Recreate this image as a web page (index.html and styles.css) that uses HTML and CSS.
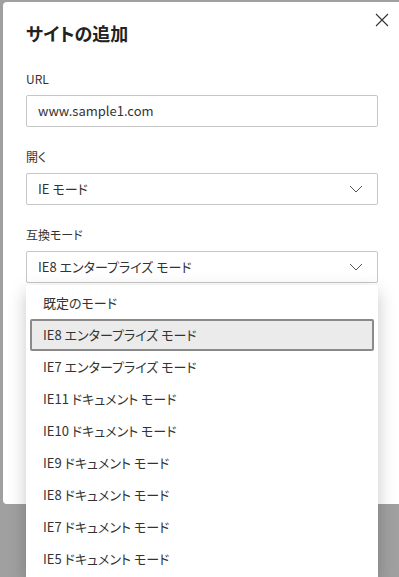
FILE: index.html
```html
<html>
    <head>
        <title>サイトの追加</title>
        <link rel="stylesheet" href="styles.css">
    </head>

    <body>
        <!-- Dialog -->
        <div class="dialog">
            <button class="close" aria-label="閉じる">
                <svg width="14" height="14" viewBox="0 0 14 14">
                    <path d="M1 1 L13 13 M13 1 L1 13" stroke="#333" stroke-width="1.1" fill="none"/>
                </svg>
            </button>

            <div class="title">サイトの追加</div>

            <div class="field">
                <div class="label">URL</div>
                <div class="box">www.sample1.com</div>
            </div>

            <div class="field">
                <div class="label">開く</div>
                <div class="box select">
                    <span>IE モード</span>
                    <svg class="chevron" width="14" height="8" viewBox="0 0 14 8">
                        <path d="M1 1 L7 7 L13 1" stroke="#555" stroke-width="1" fill="none"/>
                    </svg>
                </div>
            </div>

            <div class="field">
                <div class="label">互換モード</div>
                <div class="box select">
                    <span>IE8 エンタープライズ モード</span>
                    <svg class="chevron" width="14" height="8" viewBox="0 0 14 8">
                        <path d="M1 1 L7 7 L13 1" stroke="#555" stroke-width="1" fill="none"/>
                    </svg>
                </div>

                <!-- Open dropdown list -->
                <div class="dropdown">
                    <div class="option">既定のモード</div>
                    <div class="option selected">IE8 エンタープライズ モード</div>
                    <div class="option">IE7 エンタープライズ モード</div>
                    <div class="option">IE11 ドキュメント モード</div>
                    <div class="option">IE10 ドキュメント モード</div>
                    <div class="option">IE9 ドキュメント モード</div>
                    <div class="option">IE8 ドキュメント モード</div>
                    <div class="option">IE7 ドキュメント モード</div>
                    <div class="option">IE5 ドキュメント モード</div>
                </div>
            </div>
        </div>
    </body>
</html>
```

FILE: styles.css
```css
/* Page backdrop */
body {
    margin: 0;
    background-color: #a0a0a0;
    overflow: hidden;
    width: 399px;
    height: 577px;
    font-family: "Noto Sans CJK JP", "Noto Sans", sans-serif;
    font-feature-settings: "palt";
    color: #333;
}

/* Dialog panel */
.dialog {
    position: relative;
    margin: 2px 0 0 3px;
    width: 420px;
    height: 502px;
    padding: 19px 0 0 23px;
    box-sizing: border-box;
    background-color: #fff;
    border-radius: 4px;
}
.close {
    position: absolute;
    left: 371px;
    top: 10px;
    width: 16px;
    height: 16px;
    padding: 0;
    border: none;
    background: none;
    display: flex;
    align-items: center;
    justify-content: center;
}
.title {
    font-size: 18px;
    line-height: 24px;
    font-weight: bold;
    color: #222;
    margin-bottom: 24px;
}

/* Form fields */
.field {
    position: relative;
    width: 352px;
    margin-bottom: 20px;
}
.label {
    font-size: 12px;
    line-height: 20px;
    margin-bottom: 6px;
    color: #333;
}
.box {
    height: 32px;
    box-sizing: border-box;
    border: 1px solid #c6c6c6;
    border-radius: 2px;
    padding: 0 11px;
    font-size: 13px;
    line-height: 30px;
    color: #333;
}
.select {
    display: flex;
    align-items: center;
    justify-content: space-between;
    padding-right: 14px;
}
.chevron {
    display: block;
}

/* Dropdown list */
.dropdown {
    position: absolute;
    left: 0;
    top: 60px;
    width: 352px;
    padding: 2px 0 4px;
    background-color: #fff;
    border-radius: 3px;
    box-shadow: 0 6px 18px rgba(0, 0, 0, 0.22);
}
.option {
    margin: 0 4px;
    height: 32px;
    box-sizing: border-box;
    padding: 0 11px;
    border: 2px solid transparent;
    border-radius: 2px;
    font-size: 13px;
    line-height: 28px;
    color: #333;
}
.option.selected {
    background-color: #ebebeb;
    border-color: #8a8a8a;
}
```
